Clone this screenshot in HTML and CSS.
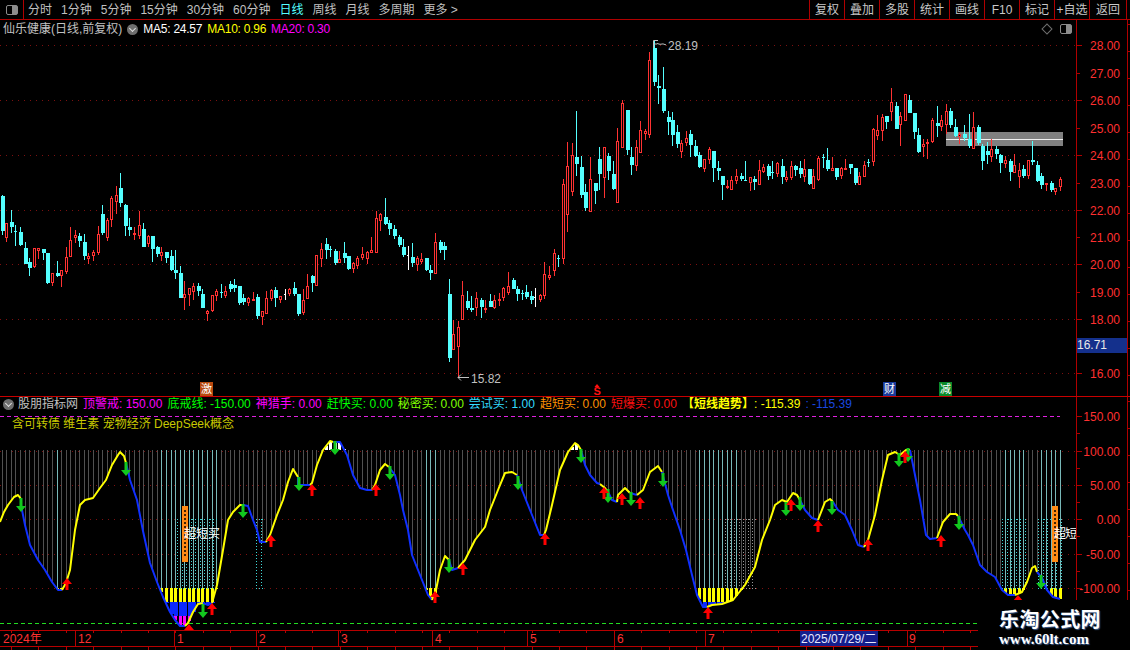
FILE: index.html
```html
<!DOCTYPE html>
<html lang="zh-CN">
<head>
<meta charset="utf-8">
<title>仙乐健康 日线</title>
<link rel="stylesheet" href="styles.css">
</head>
<body>
<div class="app">
  <header class="toolbar">
    <div class="layout-btn"><span class="panel-icon"></span></div>
    <nav class="periods">
      <span>分时</span><span>1分钟</span><span>5分钟</span><span>15分钟</span><span>30分钟</span><span>60分钟</span>
      <span class="active">日线</span><span>周线</span><span>月线</span><span>多周期</span><span>更多 &gt;</span>
    </nav>
    <nav class="actions">
      <span>复权</span><span>叠加</span><span>多股</span><span>统计</span><span>画线</span><span>F10</span><span>标记</span><span>+自选</span><span class="back">返回</span>
    </nav>
  </header>

  <section class="panel price">
    <div class="plot">
      <svg id="priceChart" class="canvas" viewBox="0 20 1076 376" width="1076" height="376"></svg>
      <div class="legend">
        <span class="name">仙乐健康(日线,前复权)</span>
        <span class="chev"></span>
        <span class="white ma">MA5: 24.57</span>
        <span class="yellow ma">MA10: 0.96</span>
        <span class="magenta ma">MA20: 0.30</span>
      </div>
      <div class="corner-tools"><span class="diamond"></span><span class="panel-icon"></span></div>
    </div>
    <svg id="priceAxis" class="axis" viewBox="1076 20 54 376" width="54" height="376"></svg>
  </section>

  <section class="panel indicator">
    <div class="plot">
      <svg id="indChart" class="canvas" viewBox="0 397 1076 233" width="1076" height="233"></svg>
      <div class="legend ind-legend">
        <span class="chev"></span>
        <span class="name">股朋指标网</span>
        <span class="magenta">顶警戒: 150.00</span>
        <span class="green">底戒线: -150.00</span>
        <span class="magenta">神猎手: 0.00</span>
        <span class="green">赶快买: 0.00</span>
        <span class="lime">秘密买: 0.00</span>
        <span class="cyan">尝试买: 1.00</span>
        <span class="orange">超短买: 0.00</span>
        <span class="red">短爆买: 0.00</span>
        <span class="yellow"><b>【短线趋势】</b>: -115.39</span>
        <span class="blue">: -115.39</span>
      </div>
      <div class="concepts">含可转债 维生素 宠物经济 DeepSeek概念</div>
    </div>
    <svg id="indAxis" class="axis" viewBox="1076 397 54 233" width="54" height="233"></svg>
  </section>

  <svg id="timeAxis" class="timeline" viewBox="0 630 1130 20" width="1130" height="20"></svg>

  <aside class="watermark">
    <div class="wm-title">乐淘公式网</div>
    <div class="wm-url">www.60lt.com</div>
  </aside>
</div>
<script src="chart.js"></script>
</body>
</html>
```
FILE: styles.css
```css
* { box-sizing: border-box; }
html, body { margin: 0; padding: 0; background: #000; }
body { font-family: "Liberation Sans", "Noto Sans CJK SC", sans-serif; font-size: 12px; color: #c8c8c8; }

.app { position: relative; width: 1130px; height: 650px; background: #000; overflow: hidden; display: flex; flex-direction: column; }

.toolbar { height: 20px; flex: none; display: flex; align-items: stretch; border-bottom: 1px solid #b00000; line-height: 20px; }
.layout-btn { width: 24px; border-right: 1px solid #b00000; display: flex; align-items: center; justify-content: center; }
.panel-icon { display: block; width: 12px; height: 10px; border: 1.5px solid #8c8c8c; border-radius: 2px; background: linear-gradient(90deg, #000 50%, #8c8c8c 50%); }
.periods { display: flex; gap: 9px; padding-left: 4px; flex: 1; color: #c0c0c0; white-space: nowrap; }
.periods .active { color: #54ffff; }
.actions { display: flex; color: #c8c8c8; margin-right: 3px; }
.actions span { width: 35px; text-align: center; border-left: 1px solid #b00000; white-space: nowrap; }
.actions .back { width: 38px; border-right: 1px solid #b00000; }

.panel { display: flex; flex: none; position: relative; }
.price { height: 377px; border-bottom: 1px solid #c80000; }
.indicator { height: 233px; }
.plot { position: relative; width: 1076px; flex: none; overflow: hidden; }
.canvas { position: absolute; left: 0; top: 0; display: block; }
.axis { display: block; flex: none; }

.legend { position: relative; display: flex; align-items: center; height: 18px; padding-left: 3px; gap: 5px; white-space: nowrap; line-height: 18px; }
.ma { letter-spacing: -.25px; }
.ind-legend { height: 14px; line-height: 14px; gap: 5px; }
.ind-legend .chev { margin-right: -1px; }
.name { color: #c0c0c0; }
.chev { position: relative; width: 11px; height: 11px; border-radius: 50%; background: #6e6e6e; flex: none; }
.chev::after { content: ""; position: absolute; left: 3px; top: 2px; width: 4px; height: 4px; border-right: 1px solid #ddd; border-bottom: 1px solid #ddd; transform: rotate(45deg); }
.white { color: #fff; }
.yellow { color: #ffff00; }
.magenta { color: #ff00ff; }
.green { color: #00ff00; }
.lime { color: #80ff00; }
.cyan { color: #33ddff; }
.orange { color: #ff9000; }
.red { color: #ff1010; }
.blue { color: #1a48e0; }
.concepts { position: relative; margin: 6px 0 0 12px; color: #c8c800; line-height: 14px; white-space: nowrap; }

.corner-tools { position: absolute; top: 4px; right: 4px; display: flex; align-items: center; gap: 9px; }
.diamond { display: block; width: 8px; height: 8px; border: 1px solid #6e6e6e; transform: rotate(45deg); }

.timeline { display: block; flex: none; }

.watermark { position: absolute; right: 0; bottom: 0; width: 152px; height: 50px; background: #000; text-align: left; padding: 7px 0 0 21px; }
.wm-title { font-family: "Noto Sans CJK SC", sans-serif; font-weight: 700; font-size: 20px; line-height: 24px; color: #fff; text-shadow: 1px 1px 1px #3a5a8a; letter-spacing: .4px; }
.wm-url { font-family: "Liberation Serif", serif; font-weight: 700; font-size: 15px; line-height: 15px; color: #fff; text-shadow: 1px 1px 1px #3a5a8a; margin-top: 1px; }

svg text { font-family: "Liberation Sans", "Noto Sans CJK SC", sans-serif; font-size: 12px; }
.tick-label { fill: #ff3030; }
.price-note { fill: #c0c0c0; }
.last-price { fill: #e8e8e8; }
.date-label { fill: #e8e8ff; }
.over-label { fill: #fff; }
.over-tight { fill: #fff; letter-spacing: -1px; }
.sign-text { fill: #fff; font-size: 11px; }
.s-mark { fill: #ff1010; font-weight: 700; font-size: 11px; }
```
FILE: chart.js
```js
var NS = 'http://www.w3.org/2000/svg';
function el(parent, name, attrs, text) {
  var n = document.createElementNS(NS, name);
  for (var k in attrs) n.setAttribute(k, attrs[k]);
  if (text !== undefined) n.textContent = text;
  parent.appendChild(n);
  return n;
}
function rect(p, x, y, w, h, fill, extra) {
  var a = { x: x, y: y, width: w, height: h, fill: fill, 'shape-rendering': 'crispEdges' };
  for (var k in extra || {}) a[k] = extra[k];
  return el(p, 'rect', a);
}
function hline(p, x1, x2, y, color, dash) {
  var a = { x1: x1, x2: x2, y1: y + .5, y2: y + .5, stroke: color, 'stroke-width': 1, 'shape-rendering': 'crispEdges' };
  if (dash) a['stroke-dasharray'] = dash;
  return el(p, 'line', a);
}
function vline(p, x, y1, y2, color, dash) {
  var a = { x1: x + .5, x2: x + .5, y1: y1, y2: y2, stroke: color, 'stroke-width': 1, 'shape-rendering': 'crispEdges' };
  if (dash) a['stroke-dasharray'] = dash;
  return el(p, 'line', a);
}

/* candles: type + wickTop,bodyTop,bodyBottom,wickBottom (page y) */
var CANDLES = 'c195,196,231,235 r223,223,238,242 c210,222,227,233 c225,231,232,246 c227,232,245,246 c242,248,264,264 c258,262,268,276 r248,248,267,268 r248,248,251,259 c249,249,253,260 c253,253,283,284 r273,273,283,286 c261,273,276,277 r270,270,276,287 r247,257,272,274 r227,240,257,257 r230,235,238,243 c233,236,241,247 c234,242,256,260 r253,256,259,264 r250,252,256,261 r226,234,253,255 c205,214,233,235 r218,220,238,241 r196,198,220,227 r186,195,202,214 c173,188,203,207 c204,205,226,236 c218,227,230,236 r227,233,235,240 r211,225,236,239 c223,229,247,247 r235,236,244,247 c236,236,249,262 c246,247,254,257 r247,252,256,261 c252,252,258,263 c250,256,270,271 c250,270,273,279 c266,273,298,298 r281,294,298,310 r288,288,295,306 r283,286,292,300 c283,286,291,296 c289,294,308,308 r310,311,314,321 r295,295,311,312 r289,291,296,301 c284,292,293,298 r286,291,296,298 c281,284,289,292 c279,285,288,292 c286,286,303,305 c294,298,302,305 r297,298,303,306 r292,299,300,300 c294,297,316,319 r311,311,317,325 r291,298,314,314 r289,290,299,301 c287,290,298,307 r296,296,300,303 w289,294,295,300 r288,289,294,296 c282,288,294,296 c294,294,314,316 r289,300,313,315 r274,286,299,299 c275,276,283,292 r255,255,286,286 r243,249,259,267 c238,244,250,259 c246,249,250,257 c249,251,263,265 r251,259,263,263 c242,253,258,263 c256,256,269,270 r262,263,269,273 r256,258,266,269 r247,254,258,260 r251,252,259,264 r237,250,253,253 r211,218,253,253 r213,214,221,231 c198,217,224,225 c220,223,229,235 c225,229,236,239 c235,237,245,247 c239,247,255,257 w246,255,256,270 c243,257,263,267 r256,258,265,271 r253,259,262,264 c258,258,270,271 c265,270,273,280 r233,242,274,274 c240,242,250,253 c242,246,250,260 c279,294,358,362 r320,334,350,350 r321,327,347,377 r281,295,320,320 c291,301,308,310 c296,308,310,312 r292,298,308,316 c298,300,307,318 r300,308,309,313 c294,301,307,307 r295,300,308,309 r293,299,301,306 r287,288,298,301 r272,286,293,295 c278,280,289,289 c286,289,294,301 c290,293,294,300 c285,292,297,299 c291,296,300,304 w288,297,298,307 r294,295,300,302 r262,274,296,299 r266,275,278,280 r249,253,271,276 c255,258,259,267 r179,184,259,264 r142,166,215,232 r143,155,192,196 c111,157,164,176 c156,167,195,198 c184,192,208,211 r157,179,212,212 c183,183,191,204 c147,159,174,190 r147,147,178,198 c153,156,171,180 c161,174,189,190 r128,141,203,203 r100,103,148,148 c110,110,150,155 c147,157,165,175 r140,147,166,171 r121,130,153,153 r129,131,134,140 r52,60,135,138 c40,48,82,86 c75,86,88,104 c67,89,111,113 c111,117,122,135 c112,120,135,146 c125,132,144,148 r140,143,152,158 r131,138,143,146 c130,134,145,157 c140,146,156,157 c152,155,167,168 r159,159,169,172 r147,149,160,164 c151,151,168,182 c161,168,171,180 c176,176,185,200 r180,186,188,189 r176,180,190,190 r169,176,181,184 c173,176,179,181 c161,180,181,181 r177,177,183,191 c176,179,182,190 r160,170,185,185 r164,167,172,173 c164,166,176,180 c161,172,173,179 r162,163,174,177 c159,166,177,184 r171,177,180,182 r161,166,178,180 c165,166,170,176 c161,168,174,178 r159,169,177,182 c169,169,184,185 r169,176,189,189 r156,158,180,181 c154,157,158,168 c148,160,169,171 r157,168,171,171 c168,168,177,180 r167,168,176,179 r159,168,169,170 c164,164,168,174 c168,168,183,185 r172,176,185,185 r161,165,177,177 c159,162,163,167 r128,129,162,166 r115,130,136,140 r114,117,131,141 c116,116,122,129 r88,102,112,121 c102,106,129,129 r112,116,125,146 r94,94,121,121 c95,100,113,113 c113,113,132,139 c128,135,152,153 r139,144,147,157 r139,142,144,159 r118,120,142,143 c106,123,126,137 r115,120,127,131 r104,111,125,134 c108,111,125,128 c119,127,136,137 r132,134,137,144 c125,134,138,141 c114,139,146,148 r112,127,149,149 c125,127,143,145 c144,146,161,170 c142,151,155,164 r139,149,157,162 c146,149,154,159 c154,155,163,173 r156,160,164,168 c159,161,172,181 r154,165,173,173 r163,170,177,188 c165,169,176,178 r160,160,176,179 c141,160,162,165 c161,165,181,182 c173,176,185,189 r183,183,185,191 c181,183,190,192 r188,188,192,195 r177,179,187,191';

var STEP = 4.56, X0 = 2.3;
var price = document.getElementById('priceChart');

[45, 100, 155, 210, 264, 319, 373].forEach(function (y) { hline(price, 0, 1076, y, '#7c1010', '1 5'); });

rect(price, 946, 132, 117, 14, '#808080');
rect(price, 946, 139, 117, 1, '#f0f0f0');

var COLORS = { r: '#ff3232', c: '#54ffff', w: '#ffffff' };
CANDLES.split(' ').forEach(function (s, i) {
  var t = s[0], v = s.slice(1).split(',').map(Number);
  var cx = Math.floor(X0 + STEP * i), col = COLORS[t];
  if (v[0] < v[1]) vline(price, cx, v[0], v[1], col);
  if (v[3] > v[2]) vline(price, cx, v[2], v[3], col);
  if (t === 'r') {
    el(price, 'rect', { x: cx - .5, y: v[1] + .5, width: 2, height: Math.max(v[2] - v[1] - 1, 1), fill: '#000', stroke: col, 'stroke-width': 1, 'shape-rendering': 'crispEdges' });
  } else if (t === 'w') {
    vline(price, cx, v[0], v[3], col);
    rect(price, cx - 1, v[1], 1, 1, col);
  } else {
    var h = Math.max(v[2] - v[1], 1);
    rect(price, cx - 1, v[1], h > 1 ? 4 : 3, h, col);
  }
});

/* price extremes */
var notes = el(price, 'g', { fill: 'none', stroke: '#c0c0c0', 'stroke-width': 1 });
el(notes, 'path', { d: 'M653.5 48V40.5H658M653.5 44H657M657 43.5l3 .8 3 -.4 3 1' });
el(notes, 'path', { d: 'M458 377.5H469M461 374.5l-3 3 3 3' });
el(price, 'text', { x: 668, y: 50, class: 'price-note' }, '28.19');
el(price, 'text', { x: 471, y: 383, class: 'price-note' }, '15.82');

/* markers */
function sign(x, bg, ch) {
  rect(price, x, 382, 13, 14, bg);
  el(price, 'text', { x: x + 1, y: 393, class: 'sign-text' }, ch);
}
sign(200, '#b84a10', '激');
sign(883, '#1a3a9a', '财');
sign(939, '#0a8a2a', '减');
el(price, 'path', { d: 'M597 384l2.5 3h-5z', fill: '#ff1010' });
el(price, 'text', { x: 593.5, y: 395, class: 's-mark' }, 'S');

/* axes */
var AXIS = '#b00000';
function axisBase(svg, y1, y2) {
  vline(svg, 1076, y1, y2, AXIS);
  vline(svg, 1127, y1, y2, AXIS);
  for (var y = y1 + 4; y < y2; y += 27) hline(svg, 1127, 1130, y, AXIS);
}
var pa = document.getElementById('priceAxis');
axisBase(pa, 20, 396);
[[45, '28.00'], [73, '27.00'], [100, '26.00'], [128, '25.00'], [155, '24.00'], [183, '23.00'], [210, '22.00'], [237, '21.00'], [264, '20.00'], [292, '19.00'], [319, '18.00'], [346, ''], [373, '16.00']].forEach(function (t, i) {
  hline(pa, 1076, i % 2 ? 1080 : 1082, t[0], AXIS);
  if (t[1]) el(pa, 'text', { x: 1120, y: t[0] + 5, 'text-anchor': 'end', class: 'tick-label' }, t[1]);
});
rect(pa, 1077, 338, 50, 15, '#14308c');
el(pa, 'text', { x: 1077, y: 349, class: 'last-price' }, '16.71');

var ia = document.getElementById('indAxis');
axisBase(ia, 397, 630);
[[416, '150.00'], [451, '100.00'], [485, '50.00'], [519, '0.00'], [554, '-50.00'], [588, '-100.00']].forEach(function (t) {
  hline(ia, 1076, 1082, t[0], AXIS);
  el(ia, 'text', { x: 1120, y: t[0] + 5, 'text-anchor': 'end', class: 'tick-label' }, t[1]);
});
[433, 468, 502, 536, 571].forEach(function (y) { hline(ia, 1076, 1080, y, AXIS); });

/* indicator */
var Y = '#ffff00', B = '#1030ff';
var SEGS = [
  [Y, [[0,522],[4,512],[8,505],[14,497],[18,495],[21,499]]],
  [B, [[21,505],[25,525],[30,545],[38,560],[45,570],[52,582],[58,590],[62,590]]],
  [Y, [[62,590],[66,583],[70,570],[75,530],[80,505],[85,500],[93,498],[100,488],[106,480],[112,465],[118,455],[120,452],[124,456],[126,463]]],
  [B, [[126,463],[130,480],[137,500],[143,531],[150,563],[157,582],[163,597],[170,612],[175,620],[180,626],[185,626]]],
  [Y, [[185,626],[188,623],[193,612],[198,604],[203,603]]],
  [B, [[203,603],[208,605],[212,603]]],
  [Y, [[212,603],[217,585],[223,550],[228,520],[233,512],[240,505],[243,505]]],
  [B, [[243,505],[248,506],[253,520],[257,530],[260,542],[266,542]]],
  [Y, [[266,542],[270,535],[277,515],[283,500],[288,482],[293,469],[298,477]]],
  [B, [[298,477],[298,485],[310,485]]],
  [Y, [[310,485],[312,483],[317,465],[323,450],[330,441],[333,442]]],
  [B, [[333,442],[340,442],[347,455],[353,475],[360,488],[367,490],[372,490]]],
  [Y, [[372,490],[375,485],[380,470],[385,464],[389,467]]],
  [B, [[389,467],[395,475],[400,495],[403,510],[408,530],[412,555],[418,570],[424,585],[428,595],[432,600]]],
  [Y, [[432,600],[436,590],[440,570],[445,556],[449,560]]],
  [B, [[449,560],[452,570],[458,568]]],
  [Y, [[458,568],[465,560],[475,540],[485,527],[490,510],[498,490],[505,473],[512,472],[517,475]]],
  [B, [[517,475],[522,490],[530,510],[540,535],[544,535]]],
  [Y, [[544,535],[546,530],[552,505],[560,470],[568,452],[575,443],[578,445],[581,450]]],
  [B, [[581,450],[585,465],[590,475],[597,483],[600,484]]],
  [Y, [[600,484],[605,488],[608,492]]],
  [B, [[608,492],[612,500],[617,502]]],
  [Y, [[617,502],[618,495],[625,488],[630,493]]],
  [B, [[630,493],[637,495]]],
  [Y, [[637,495],[643,490],[650,472],[658,466],[662,472]]],
  [B, [[662,472],[668,495],[673,510],[680,530],[686,550],[692,575],[697,595],[703,607],[707,607]]],
  [Y, [[707,607],[712,605],[722,604],[733,600],[745,585],[755,567],[762,540],[770,520],[775,505],[782,500],[787,502],[793,493],[797,495],[800,500]]],
  [B, [[800,500],[805,510],[812,518],[818,520]]],
  [Y, [[818,520],[825,502],[830,499],[833,502]]],
  [B, [[833,502],[838,510],[845,515],[852,530],[858,545],[864,547]]],
  [Y, [[864,547],[868,540],[875,515],[882,480],[888,455],[895,452],[900,455],[906,450],[910,450]]],
  [B, [[910,450],[913,465],[920,500],[926,535],[930,539],[937,538]]],
  [Y, [[937,538],[943,522],[950,514],[956,514],[958,516]]],
  [B, [[958,516],[965,530],[968,535],[973,545],[980,565],[987,572],[995,577],[1002,590],[1008,595],[1015,595]]],
  [Y, [[1015,595],[1022,592],[1027,582],[1032,568],[1035,566],[1037,572]]],
  [B, [[1037,572],[1042,578],[1047,590],[1053,597],[1060,599]]]
];
var POINTS = [];
SEGS.forEach(function (s) { POINTS = POINTS.concat(s[1]); });
function curveY(x) {
  for (var i = 1; i < POINTS.length; i++) {
    var a = POINTS[i - 1], b = POINTS[i];
    if (x <= b[0] && b[0] > a[0]) return a[1] + (b[1] - a[1]) * (x - a[0]) / (b[0] - a[0]);
  }
  return POINTS[POINTS.length - 1][1];
}

var ind = document.getElementById('indChart');
[[451], [485], [519], [554], [588]].forEach(function (r) { hline(ind, 0, 1076, r[0], '#7c1010', '1 5'); });
hline(ind, 0, 1060, 416, '#e020e0', '4 3');
hline(ind, 0, 978, 623, '#22dd22', '4 3');

var LIGHT = [[55, 60], [160, 218], [425, 438], [697, 738], [1005, 1026], [1038, 1062]];
function isLight(x) { return LIGHT.some(function (r) { return x >= r[0] && x <= r[1]; }); }

for (var i = 0; i * STEP + X0 < 1062; i++) {
  var x = Math.floor(X0 + STEP * i), cy = curveY(x);
  if (cy > 450) vline(ind, x, 450, Math.min(cy, 588), isLight(x) ? '#78b8b8' : '#505050');
  if (cy < 450) rect(ind, x - 1, cy, 3, 450 - cy, '#fff');
  if (cy > 588) {
    rect(ind, x - 1, 588, 3, Math.min(cy, 602) - 588, '#ffff00');
    if (cy > 602) rect(ind, x - 1, 602, 4, Math.min(cy, 616) - 602, '#0a28ff');
    if (cy > 616) rect(ind, x - 1, 616, 3, cy - 616, '#ff00ff');
  }
}

/* dotted zones */
[[177, 217, '#3fd8d8'], [256, 264, '#3fd8d8'], [725, 756, '#9a9a9a'], [1002, 1026, '#3fd8d8'], [1038, 1062, '#3fd8d8']].forEach(function (z) {
  for (var x = z[0]; x <= z[1]; x += 4.56) vline(ind, Math.round(x), 519, 588, z[2], '1 2');
  hline(ind, z[0], z[1], 519, z[2], '1 2');
  hline(ind, z[0], z[1], 588, z[2], '1 2');
});

/* curve */
SEGS.forEach(function (s) {
  el(ind, 'polyline', { points: s[1].map(function (p) { return p.join(','); }).join(' '), fill: 'none', stroke: s[0], 'stroke-width': 2, 'stroke-linejoin': 'round' });
});

/* orange bars */
[182, 1052].forEach(function (x) {
  rect(ind, x, 506, 6, 56, '#ff8a14');
  vline(ind, x + 2, 510, 556, '#402000', '2 2');
  vline(ind, x + 3, 510, 556, '#402000', '2 2');
});
el(ind, 'text', { x: 184, y: 538, class: 'over-label' }, '超短买');
el(ind, 'text', { x: 1054, y: 538, class: 'over-tight' }, '超短');

/* arrows */
function downArrow(x, tip) {
  el(ind, 'path', { d: 'M' + x + ' ' + tip + 'l-5 -6h3.5v-8h3v8h3.5z', fill: '#12c81e' });
}
function upArrow(x, tip) {
  el(ind, 'path', { d: 'M' + x + ' ' + tip + 'l5 6h-3.5v6h-3v-6h-3.5z', fill: '#ff0000' });
}
[[21,512],[126,476],[203,618],[243,518],[299,491],[335,455],[390,480],[449,573],[518,490],[581,463],[608,503],[631,506],[663,487],[786,516],[800,511],[832,515],[899,467],[908,462],[959,530],[1041,589]].forEach(function (a) { downArrow(a[0], a[1]); });
[[67,578],[189,624],[212,603],[271,535],[312,484],[376,484],[435,591],[463,563],[545,533],[604,487],[622,493],[640,497],[708,607],[791,499],[818,520],[868,539],[905,451],[941,535],[1018,595]].forEach(function (a) { upArrow(a[0], a[1]); });

/* time axis */
var ta = document.getElementById('timeAxis');
var TA = '#b80000';
hline(ta, 0, 978, 630, TA);
hline(ta, 0, 978, 646, TA);
for (var t = 11; t < 978; t += 27.4) {
  vline(ta, Math.round(t), 630, 633, TA);
  vline(ta, Math.round(t), 646, 650, TA);
}
[[0, '2024年', 3], [75, '12', 78], [174, '1', 177], [256, '2', 259], [338, '3', 341], [432, '4', 435], [527, '5', 530], [614, '6', 617], [705, '7', 708], [907, '9', 909]].forEach(function (l) {
  if (l[0]) vline(ta, l[0], 630, 646, TA);
  el(ta, 'text', { x: l[2], y: 643, class: 'tick-label' }, l[1]);
});
rect(ta, 800, 631, 78, 15, '#141e8c');
el(ta, 'text', { x: 801, y: 643, class: 'date-label' }, '2025/07/29/二');
```
